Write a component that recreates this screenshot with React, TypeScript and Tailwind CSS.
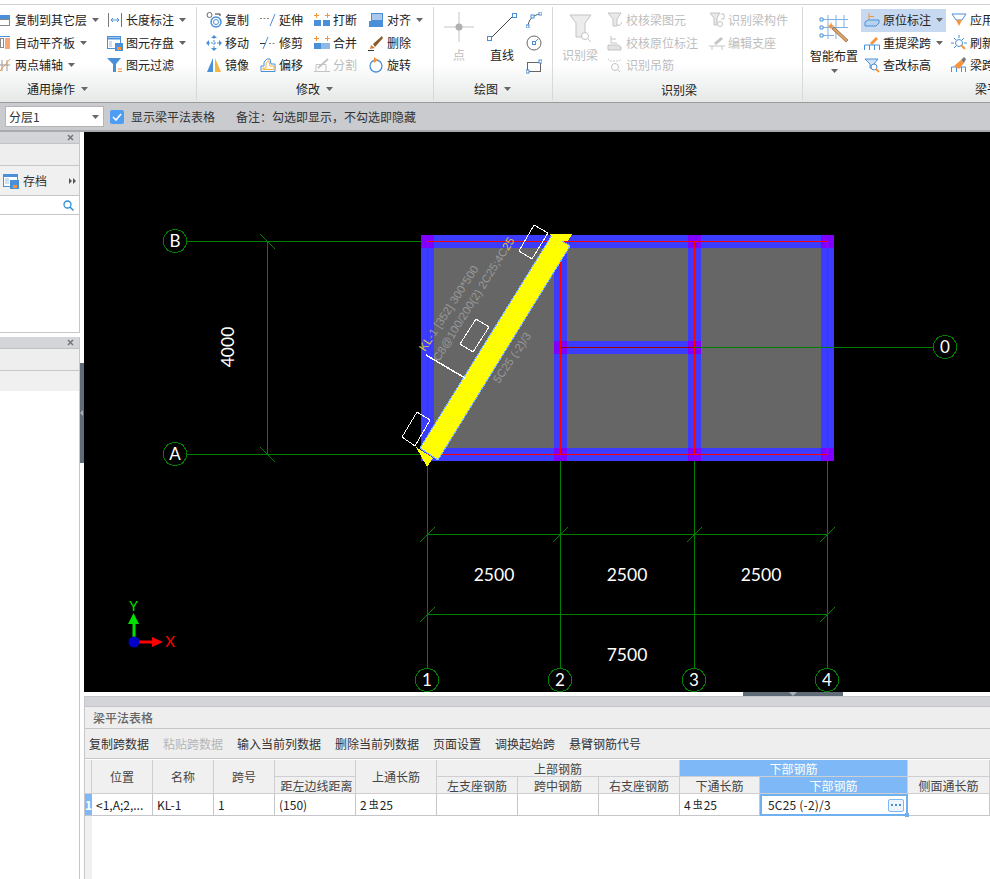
import type { ReactNode } from 'react'

const BLUE = '#4a90d9'
const ORANGE = '#f5943c'
const GRAY = '#c4c4c4'
const GREEN = '#008000'

function Ico({ children, size = 16 }: { children: ReactNode; size?: number }) {
  return (
    <svg width={size} height={size} viewBox="0 0 16 16" fill="none" className="shrink-0">
      {children}
    </svg>
  )
}

function Caret({ className = '' }: { className?: string }) {
  return (
    <svg width="7" height="4" viewBox="0 0 7 4" className={`shrink-0 ${className}`}>
      <path d="M0 0h7L3.5 4z" fill="#666" />
    </svg>
  )
}

function Item({
  icon,
  label,
  caret,
  disabled,
  active,
}: {
  icon: ReactNode
  label: string
  caret?: boolean
  disabled?: boolean
  active?: boolean
}) {
  return (
    <div
      className={`flex items-center gap-[3px] h-[22.5px] whitespace-nowrap ${
        disabled ? 'text-[#bdbdbd]' : 'text-[#222]'
      } ${active ? 'bg-[#c7d9f1] -ml-[3px] pl-[3px]' : ''}`}
    >
      {icon}
      <span>{label}</span>
      {caret && <Caret className="ml-[2px]" />}
    </div>
  )
}

function Group({
  width,
  label,
  labelClass,
  caret,
  children,
}: {
  width: string
  label: string
  labelClass: string
  caret?: boolean
  children: ReactNode
}) {
  return (
    <div className={`${width} shrink-0 flex flex-col border-r border-[#d6d8da] my-[2px]`}>
      <div className="flex h-[71px] pt-[2px]">{children}</div>
      <div className={`flex items-center h-[22px] gap-[6px] ${labelClass}`}>
        <span>{label}</span>
        {caret && <Caret />}
      </div>
    </div>
  )
}

function Ribbon() {
  return (
    <div className="h-[98px] flex bg-gradient-to-b from-white from-60% to-[#e6e8e8] border-b border-[#9a9c9e] text-xs text-[#222]">
      <Group width="w-[197px]" label="通用操作" labelClass="pl-[27px]" caret>
        <div className="w-[111px] shrink-0 -ml-[4px]">
          <Item
            caret
            label="复制到其它层"
            icon={
              <Ico>
                <rect x="0" y="3" width="14" height="4" fill={BLUE} />
                <rect x="0.500" y="7.500" width="13" height="6" stroke="#888" />
              </Ico>
            }
          />
          <Item
            caret
            label="自动平齐板"
            icon={
              <Ico>
                <path d="M0 1.500h14" stroke={BLUE} />
                <rect x="4.500" y="3.500" width="3" height="9" stroke="#888" />
                <rect x="9" y="3" width="5" height="11" fill="#f5a77a" />
              </Ico>
            }
          />
          <Item
            caret
            label="两点辅轴"
            icon={
              <Ico>
                <path d="M6 3v11M11 3v11M3 8h11" stroke="#999" />
                <path d="M4 14L14 2" stroke={ORANGE} />
              </Ico>
            }
          />
        </div>
        <div>
          <Item
            caret
            label="长度标注"
            icon={
              <Ico>
                <path d="M1.500 1v14M14.500 1v14" stroke="#777" />
                <path d="M4 8h8M6 6L4 8l2 2M10 6l2 2-2 2" stroke={BLUE} />
              </Ico>
            }
          />
          <Item
            caret
            label="图元存盘"
            icon={
              <Ico>
                <rect x="0.500" y="1.500" width="13" height="12" stroke={BLUE} fill="#fff" />
                <path d="M0 3.500h14" stroke={BLUE} strokeWidth="2" />
                <path d="M2 7h3M2 9h3M2 11h3" stroke="#9bbfe6" />
                <rect x="8" y="8" width="8" height="8" fill={BLUE} />
                <rect x="10" y="12" width="4" height="3" fill={ORANGE} />
              </Ico>
            }
          />
          <Item
            label="图元过滤"
            icon={
              <Ico>
                <path d="M0 1h14L9 7v8H6V7z" fill={BLUE} />
                <path d="M11 12h4M11 14.500h4" stroke={ORANGE} />
              </Ico>
            }
          />
        </div>
      </Group>

      <Group width="w-[237px]" label="修改" labelClass="pl-[99px]" caret>
        <div className="w-[54px] shrink-0 ml-[9px]">
          <Item
            label="复制"
            icon={
              <Ico>
                <circle cx="3.500" cy="3" r="2.500" stroke="#666" />
                <circle cx="10" cy="10" r="5" stroke={BLUE} strokeWidth="1.500" />
                <circle cx="10" cy="10" r="2.500" stroke={BLUE} />
                <path d="M9 2h5v2" stroke="#333" />
              </Ico>
            }
          />
          <Item
            label="移动"
            icon={
              <Ico>
                <path d="M8 2v12M2 8h12" stroke={BLUE} strokeDasharray="2 1" />
                <path d="M8 0l3 3H5zM8 16l3-3H5zM0 8l3-3v6zM16 8l-3-3v6z" fill={BLUE} />
              </Ico>
            }
          />
          <Item
            label="镜像"
            icon={
              <Ico>
                <path d="M7 1v14H1z" fill={BLUE} />
                <path d="M9 1v14h6z" fill="#f5b53c" />
              </Ico>
            }
          />
        </div>
        <div className="w-[54px] shrink-0">
          <Item
            label="延伸"
            icon={
              <Ico>
                <path d="M0 6.500h9" stroke="#888" strokeDasharray="2 1.500" />
                <path d="M10 14l5-12" stroke={BLUE} />
              </Ico>
            }
          />
          <Item
            label="修剪"
            icon={
              <Ico>
                <path d="M0 8.500h6" stroke="#333" />
                <path d="M9 8.500h7" stroke="#888" strokeDasharray="2 1.500" />
                <path d="M3 14L8 2" stroke={BLUE} />
              </Ico>
            }
          />
          <Item
            label="偏移"
            icon={
              <Ico>
                <path d="M1 14.500V9h3V5l3-3h3l1 5h4v7.500z" stroke={BLUE} />
                <path d="M3 12.500V11h3V6l2-2h1l1 5h4v3.500z" stroke="#f5b53c" />
              </Ico>
            }
          />
        </div>
        <div className="w-[54px] shrink-0">
          <Item
            label="打断"
            icon={
              <Ico>
                <path d="M0 3.500h5M2.500 1v5M11 3.500h5M13.500 1v5" stroke={ORANGE} />
                <rect x="0" y="8" width="7" height="6" fill={BLUE} />
                <rect x="9" y="8" width="7" height="6" fill={BLUE} />
              </Ico>
            }
          />
          <Item
            label="合并"
            icon={
              <Ico>
                <path d="M0 3.500h5M2.500 1v5M11 3.500h5M13.500 1v5" stroke={ORANGE} />
                <rect x="0" y="8" width="7" height="6" fill={BLUE} />
                <rect x="7" y="8" width="9" height="6" fill="#8db8e8" />
              </Ico>
            }
          />
          <Item
            disabled
            label="分割"
            icon={
              <Ico>
                <path d="M0 14.500h16M2 14V7.500h10V14" stroke={GRAY} />
                <path d="M4 11l10-9" stroke={GRAY} strokeWidth="2" />
              </Ico>
            }
          />
        </div>
        <div className="shrink-0">
          <Item
            caret
            label="对齐"
            icon={
              <Ico>
                <rect x="3.500" y="1.500" width="11" height="7" fill="#a9c8ec" stroke={BLUE} />
                <rect x="1" y="9" width="14" height="6" fill={BLUE} />
              </Ico>
            }
          />
          <Item
            label="删除"
            icon={
              <Ico>
                <path d="M5 9l9-8 1 2-8 9z" fill="#8a5a2c" />
                <path d="M3 10l4 3-5 1z" fill="#d97a30" />
                <path d="M0 15.500h6" stroke="#333" />
              </Ico>
            }
          />
          <Item
            label="旋转"
            icon={
              <Ico>
                <circle cx="8" cy="9" r="6" stroke={BLUE} strokeWidth="1.300" />
                <path d="M6 0l4 3-4 3z" fill={ORANGE} />
              </Ico>
            }
          />
        </div>
      </Group>

      <Group width="w-[119px]" label="绘图" labelClass="pl-[40px]" caret>
        <div className="w-[30px] ml-[10px] shrink-0 flex flex-col items-center">
          <svg width="30" height="30" viewBox="0 0 30 30" className="mt-[3px]">
            <path d="M15 0v30M0 15h30" stroke="#c4c4c4" />
            <circle cx="15" cy="15" r="3.500" fill="#b0b0b0" />
          </svg>
          <span className="mt-[5px] text-[#bdbdbd]">点</span>
        </div>
        <div className="w-[40px] ml-[8px] shrink-0 flex flex-col items-center">
          <svg width="30" height="30" viewBox="0 0 30 30" className="mt-[3px]">
            <path d="M3 27L27 3" stroke="#444" />
            <rect x="0.500" y="24.500" width="4" height="4" fill="#fff" stroke={BLUE} />
            <rect x="25.500" y="1.500" width="4" height="4" fill="#fff" stroke={BLUE} />
          </svg>
          <span className="mt-[5px]">直线</span>
        </div>
        <div className="ml-[4px] shrink-0 flex flex-col gap-[7px] mt-[3px]">
          <Ico>
            <path d="M2 15C2 8 7 3 14 2" stroke="#555" />
            <rect x="0" y="13" width="3" height="3" fill="#fff" stroke={BLUE} />
            <rect x="5" y="3" width="3" height="3" fill="#fff" stroke={BLUE} />
            <rect x="13" y="0" width="3" height="3" fill="#fff" stroke={BLUE} />
          </Ico>
          <Ico>
            <circle cx="8" cy="8" r="7" stroke="#666" />
            <path d="M8 8l4-4" stroke={BLUE} />
            <rect x="6.500" y="6.500" width="3" height="3" fill="#fff" stroke={BLUE} />
          </Ico>
          <Ico>
            <rect x="1.500" y="4.500" width="13" height="9" stroke="#666" />
            <rect x="0" y="12" width="3" height="3" fill="#fff" stroke={BLUE} />
            <rect x="13" y="2" width="3" height="3" fill="#fff" stroke={BLUE} />
          </Ico>
        </div>
      </Group>

      <Group width="w-[250px]" label="识别梁" labelClass="pl-[108px] pt-[2px]">
        <div className="w-[44px] ml-[5px] shrink-0 flex flex-col items-center text-[#bdbdbd]">
          <svg width="23" height="28" viewBox="0 0 23 28" className="mt-[5px]">
            <path d="M1 1h21l-6 8v14H7V9z" fill="#ececec" stroke="#c4c4c4" />
            <circle cx="16" cy="22" r="3.500" fill="#fff" stroke="#c4c4c4" />
            <path d="M19 25l3 3" stroke="#c4c4c4" />
          </svg>
          <span className="mt-[5px]">识别梁</span>
        </div>
        <div className="w-[102px] ml-[5px] shrink-0">
          <Item
            disabled
            label="校核梁图元"
            icon={
              <Ico>
                <path d="M1 1h13l-4 6v7H6V7z" fill="#e8e8e8" stroke={GRAY} />
                <path d="M10 12l2 2 3-4" stroke={GRAY} />
              </Ico>
            }
          />
          <Item
            disabled
            label="校核原位标注"
            icon={
              <Ico>
                <path d="M4 1v7h6M4 4h5" stroke={GRAY} />
                <path d="M1 10h10l3 2v3H1z" fill="#e2e2e2" stroke={GRAY} />
              </Ico>
            }
          />
          <Item
            disabled
            label="识别吊筋"
            icon={
              <Ico>
                <path d="M1 2l2 2h9l2-2" stroke={GRAY} strokeDasharray="2 1" />
                <circle cx="8" cy="10" r="3.500" stroke={GRAY} />
                <path d="M11 13l2 2" stroke={GRAY} />
              </Ico>
            }
          />
        </div>
        <div className="shrink-0">
          <Item
            disabled
            label="识别梁构件"
            icon={
              <Ico>
                <path d="M1 1h10l-3 5v7H5V6z" fill="#e8e8e8" stroke={GRAY} />
                <path d="M12 2h3v5h-3" stroke={GRAY} />
                <circle cx="11" cy="12" r="2.500" stroke={GRAY} />
              </Ico>
            }
          />
          <Item
            disabled
            label="编辑支座"
            icon={
              <Ico>
                <path d="M5 8l7-6 2 2-7 6z" fill={GRAY} />
                <path d="M0 11h16M3 11v4M13 11v4" stroke={GRAY} />
              </Ico>
            }
          />
        </div>
      </Group>

      <div className="flex-1 flex flex-col my-[2px]">
        <div className="flex h-[71px] pt-[2px]">
          <div className="w-[52px] ml-[5px] shrink-0 flex flex-col items-center">
            <svg width="30" height="29" viewBox="0 0 30 29" className="mt-[5px]">
              <path d="M9 1v24M17 1v24M25 1v12M3 5.500h26M3 13.500h26M3 21.500h12" stroke="#7fb0e6" />
              <path d="M1 4h3v3H1zM1 12h3v3H1zM1 20h3v3H1z" fill="#fff" stroke={BLUE} />
              <path d="M15 13l14 13-2 2-14-13z" fill="#d9a36b" stroke="#8a5a2c" strokeWidth="0.700" />
              <path d="M12 8l1 3 3 1-3 1-1 3-1-3-3-1 3-1z" fill={ORANGE} />
            </svg>
            <span className="mt-[5px]">智能布置</span>
            <Caret className="mt-[5px]" />
          </div>
          <div className="w-[85px] ml-[1px] pl-[3px] shrink-0">
            <Item
              active
              caret
              label="原位标注"
              icon={
                <Ico>
                  <path d="M5 1v7.500h6M5 4.500h5" stroke={ORANGE} />
                  <path d="M1 10l3-2h11v3l-3 3H1z" fill="#b6d2f0" stroke={BLUE} />
                </Ico>
              }
            />
            <Item
              caret
              label="重提梁跨"
              icon={
                <Ico>
                  <path d="M6 8l6-6 2 2-6 6z" fill={ORANGE} />
                  <path d="M0.500 15v-5h15v5M5.500 10v5M10.500 10v5" stroke={BLUE} />
                </Ico>
              }
            />
            <Item
              label="查改标高"
              icon={
                <Ico>
                  <path d="M1 2h13l-4 5v4H6V7z" fill="#cfe2f6" stroke={BLUE} />
                  <circle cx="10" cy="10" r="3" fill="#fff" stroke={BLUE} />
                  <path d="M12 12l3 3" stroke={ORANGE} strokeWidth="2" />
                </Ico>
              }
            />
          </div>
          <div className="ml-[5px] shrink-0">
            <Item
              label="应用同名梁"
              icon={
                <Ico>
                  <path d="M1 2h14l-4 6H5z" stroke={BLUE} />
                  <path d="M5 8h6l-3 6z" fill={ORANGE} />
                </Ico>
              }
            />
            <Item
              label="刷新支座尺寸"
              icon={
                <Ico>
                  <circle cx="8" cy="8" r="3.500" stroke={BLUE} />
                  <path d="M8 0v3M3 8H0M16 8h-3M3 3l2 2M13 3l-2 2M3 13l2-2" stroke={BLUE} />
                  <path d="M10 10l4 4" stroke={ORANGE} strokeWidth="2" />
                </Ico>
              }
            />
            <Item
              label="梁跨数据复制"
              icon={
                <Ico>
                  <path d="M0.500 15v-5h14v5M5.500 10v5M10.500 10v5" stroke={BLUE} />
                  <path d="M3 9l7-6 3 3-5 6z" fill={ORANGE} />
                  <path d="M10 3l3-3 2 2-2 4z" fill="#777" />
                </Ico>
              }
            />
          </div>
        </div>
        <div className="h-[22px] pl-[172px] flex items-center">梁平法表格</div>
      </div>
    </div>
  )
}

function OptionBar() {
  return (
    <div className="h-[29px] flex items-center bg-[#c9cbcf] text-xs text-[#333] border-b-2 border-[#a8aaae] pl-[5px]">
      <div className="w-[99px] h-[21px] flex items-center justify-between bg-white border border-[#b5b5b5] pl-[3px] pr-[4px]">
        <span>分层1</span>
        <Caret />
      </div>
      <div className="ml-[6px] w-[14px] h-[14px] rounded-[2px] bg-[#4d9df5] flex items-center justify-center">
        <svg width="10" height="8" viewBox="0 0 10 8">
          <path d="M1 4l3 3 5-6" stroke="#fff" strokeWidth="1.600" fill="none" />
        </svg>
      </div>
      <span className="ml-[7px]">显示梁平法表格</span>
      <span className="ml-[21px]">备注：勾选即显示，不勾选即隐藏</span>
    </div>
  )
}

function TitleBar() {
  return (
    <div className="h-[12px] bg-[#d3d5d9] flex items-center justify-end pr-[5px] border-b border-[#c0c2c6]">
      <svg width="7" height="7" viewBox="0 0 7 7">
        <path d="M1 1l5 5M6 1L1 6" stroke="#777" strokeWidth="1.600" />
      </svg>
    </div>
  )
}

function SidePanel() {
  return (
    <div className="w-[84px] shrink-0 flex flex-col bg-white">
      <div className="w-[80px] h-[201px] flex flex-col border-r border-b border-[#c4c6ca] text-xs">
        <TitleBar />
        <div className="h-[22px] bg-[#eeeeee] border-b border-[#c4c6ca]" />
        <div className="h-[30px] bg-[#f0f0f0] border-b border-[#c4c6ca] flex items-center pl-[3px] pr-[3px]">
          <Ico>
            <rect x="0.500" y="1.500" width="14" height="12" fill="#fff" stroke={BLUE} />
            <path d="M0 3h15" stroke={BLUE} strokeWidth="2" />
            <path d="M2 6h4M2 8h4M2 10h4" stroke="#9bbfe6" />
            <rect x="7" y="7" width="9" height="9" fill={BLUE} />
            <rect x="10" y="12" width="4" height="3" fill={ORANGE} />
          </Ico>
          <span className="ml-[4px] text-[#333]">存档</span>
          <svg width="7" height="6" viewBox="0 0 7 6" className="ml-auto">
            <path d="M0 0l3 3-3 3zM4 0l3 3-3 3z" fill="#555" />
          </svg>
        </div>
        <div className="h-[19px] border-b border-[#c4c6ca] flex items-center justify-end pr-[5px]">
          <svg width="11" height="11" viewBox="0 0 11 11" fill="none">
            <circle cx="4.500" cy="4.500" r="3.500" stroke="#2f8fd0" strokeWidth="1.300" />
            <path d="M7 7l3.500 3.500" stroke="#2f8fd0" strokeWidth="1.500" />
          </svg>
        </div>
      </div>
      <div className="h-[4px]" />
      <div className="relative flex-1 w-[80px] flex flex-col border-r border-[#c4c6ca]">
        <TitleBar />
        <div className="h-[22px] bg-[#eeeeee] border-b border-[#c4c6ca]" />
        <div className="h-[20px] bg-[#f0f0f0]" />
        <div className="absolute left-[80px] top-[26px] w-[4px] h-[100px] bg-[#5f6b76] flex items-center">
          <svg width="3" height="6" viewBox="0 0 3 6">
            <path d="M3 0v6L0 3z" fill="#a9b0b6" />
          </svg>
        </div>
      </div>
    </div>
  )
}

// axis bubbles are faceted in the CAD view, not true circles
function Bubble({ x, y, label }: { x: number; y: number; label: string }) {
  const points = Array.from({ length: 10 }, (_, i) => {
    const a = (Math.PI / 5) * i + Math.PI / 2
    return `${(x + 12 * Math.cos(a)).toFixed(1)},${(y + 12 * Math.sin(a)).toFixed(1)}`
  }).join(' ')
  return (
    <g>
      <polygon points={points} fill="#000" stroke={GREEN} shapeRendering="crispEdges" />
      <text x={x} y={y + 6} textAnchor="middle" fontSize="17" fill="#fff">
        {label}
      </text>
    </g>
  )
}

function Canvas() {
  const purple = [
    [421, 235],
    [688, 235],
    [821, 235],
    [554, 341],
    [688, 341],
    [554, 448],
    [688, 448],
    [821, 448],
  ]
  return (
    <svg
      viewBox="84 132 906 560"
      className="block w-[906px] h-[560px] bg-black"
      style={{ fontFamily: 'Lato, "Liberation Sans", sans-serif' }}
    >
      <g shapeRendering="crispEdges">
        <path
          d="M187 241.5H427M187 454.5H427M427.5 461V668M560.5 461V668M694.5 461V668M827.5 461V668M267.5 241V454M427 534.5H828M427 614.5H828"
          stroke={GREEN}
        />
        <path
          d="M260 234L275 249M260 447L275 462M420 542L435 527M553 542L568 527M687 542L702 527M820 542L835 527M420 622L435 607M820 622L835 607"
          stroke={GREEN}
        />

        <rect x="421" y="235" width="413" height="226" fill="#3c3cff" />
        <rect x="434" y="248" width="120" height="200" fill="#666" />
        <rect x="567" y="248" width="121" height="93" fill="#666" />
        <rect x="567" y="354" width="121" height="94" fill="#666" />
        <rect x="701" y="248" width="120" height="200" fill="#666" />
        {purple.map(([x, y]) => (
          <rect key={`${x}-${y}`} x={x} y={y} width="13" height="13" fill="#8000ff" />
        ))}
        <path d="M427 241.5H828M427 454.5H828M427.5 241V455M560.5 241V455M694.5 241V455M827.5 241V455" stroke="#ff0000" />
        <path d="M560 347.5H694" stroke="#a00000" />
        <path d="M694 347.5H934" stroke={GREEN} />

        <path d="M552 235L570 246L438 460L420 448Z" fill="#ffff00" stroke="#7fb8ff" />
        <path d="M549 234H572L568 241L556 241Z" fill="#ffff00" />
        <path d="M416 447L433 458L427 467Z" fill="#ffff00" />
        <g fill="none" stroke="#fff">
          <path d="M534 225L548 233L532 259L519 251Z" />
          <path d="M476 319L489 327L473 352L460 344Z" />
          <path d="M417 412L430 420L415 446L402 437Z" />
        </g>
        <path d="M426 355L465 378" stroke="#fff" strokeWidth="1.500" />
      </g>

      <g fontSize="11.5" fill="#999" style={{ fontFamily: '"Liberation Sans", sans-serif' }}>
        <text transform="translate(425 352) rotate(-57)">
          <tspan fill="#d8c83a">KL</tspan>-1 [352] 300*500
        </text>
        <text transform="translate(439 362) rotate(-58)">
          C8@100/200(2) 2C25;4C<tspan fill="#d8c83a">25</tspan>
        </text>
        <text transform="translate(499 384) rotate(-56)">5C25 (-2)/3</text>
      </g>

      <g fontSize="17.500" fill="#fff" textAnchor="middle">
        <text x="494" y="581">2500</text>
        <text x="627" y="581">2500</text>
        <text x="761" y="581">2500</text>
        <text x="627" y="661">7500</text>
        <text transform="translate(234 347) rotate(-90)">4000</text>
      </g>

      <Bubble x={175} y={241} label="B" />
      <Bubble x={175} y={454} label="A" />
      <Bubble x={945} y={347} label="0" />
      <Bubble x={427} y={680} label="1" />
      <Bubble x={560} y={680} label="2" />
      <Bubble x={694} y={680} label="3" />
      <Bubble x={827} y={680} label="4" />

      <path d="M134 642V622" stroke="#00e000" strokeWidth="3" />
      <path d="M133.500 613L139 624H128Z" fill="#00e000" />
      <path d="M134 642H153" stroke="#ff0000" strokeWidth="3" />
      <path d="M163 642L152 637V647Z" fill="#ff0000" />
      <circle cx="134" cy="642" r="5.500" fill="#0000c8" />
      <text x="133.500" y="611" fontSize="14" fill="#00e000" textAnchor="middle">Y</text>
      <text x="170" y="647" fontSize="15" fill="#ff0000" textAnchor="middle">X</text>
    </svg>
  )
}

const headCell =
  'flex items-center justify-center pt-[1px] bg-[#f0f0f0] border-r border-b border-[#cfcfd3] text-[#444] whitespace-nowrap overflow-hidden'
const bodyCell = 'flex items-center pl-[4px] pt-[1px] border-r border-b border-[#c4c6ca] text-[#222]'

function Rebar({ n }: { n: string }) {
  return (
    <span>
      {n}
      <span className="text-[10px] relative -top-[2px] ml-[2px] mr-[1px]">虫</span>25
    </span>
  )
}

function BeamTable() {
  return (
    <div className="flex-1 flex flex-col bg-white border-l border-[#c4c6ca] text-xs">
      <div className="h-[11px] bg-[#d3d5d9] border-y border-[#c4c6ca]" />
      <div className="h-[22px] bg-[#eeeeee] border-b border-[#c4c6ca] flex items-center pl-[8px] pt-[1px] text-[#666] font-medium">
        梁平法表格
      </div>
      <div className="h-[30px] bg-[#eeeeee] border-b border-[#c4c6ca] flex items-center gap-[14px] pl-[4px] text-[#333]">
        <span>复制跨数据</span>
        <span className="text-[#b5b5b5]">粘贴跨数据</span>
        <span>输入当前列数据</span>
        <span>删除当前列数据</span>
        <span>页面设置</span>
        <span>调换起始跨</span>
        <span>悬臂钢筋代号</span>
      </div>
      <div className="mt-[1px] grid grid-cols-[7px_61px_61px_61px_81px_81px_81px_81px_81px_80px_148px_82px] grid-rows-[17px_17px_22px]">
        <div className={`${headCell} row-span-2`} />
        <div className={`${headCell} row-span-2`}>位置</div>
        <div className={`${headCell} row-span-2`}>名称</div>
        <div className={`${headCell} row-span-2`}>跨号</div>
        <div className={headCell} />
        <div className={`${headCell} row-span-2`}>上通长筋</div>
        <div className={`${headCell} col-span-3`}>上部钢筋</div>
        <div className={`${headCell} col-span-2 !bg-[#7eb8f7] !text-white`}>下部钢筋</div>
        <div className={headCell} />
        <div className={`${headCell} pl-[3px]`}>距左边线距离</div>
        <div className={headCell}>左支座钢筋</div>
        <div className={headCell}>跨中钢筋</div>
        <div className={headCell}>右支座钢筋</div>
        <div className={headCell}>下通长筋</div>
        <div className={`${headCell} !bg-[#7eb8f7] !text-white`}>下部钢筋</div>
        <div className={headCell}>侧面通长筋</div>

        <div className="flex items-center justify-center bg-[#7eb8f7] text-white font-bold border-b border-[#c4c6ca]">
          1
        </div>
        <div className={bodyCell}>&lt;1,A;2,...</div>
        <div className={bodyCell}>KL-1</div>
        <div className={bodyCell}>1</div>
        <div className={bodyCell}>(150)</div>
        <div className={bodyCell}><Rebar n="2" /></div>
        <div className={bodyCell} />
        <div className={bodyCell} />
        <div className={bodyCell} />
        <div className={bodyCell}><Rebar n="4" /></div>
        <div className="relative flex items-center justify-between border-2 border-[#6fb0f0] pl-[6px] pr-[2px] text-[#222]">
          <span className="tracking-[0.2px]">5C25 (-2)/3</span>
          <div className="w-[16px] h-[13px] rounded-[2px] border border-[#7eb8f7] bg-[#eef5fd] flex items-center justify-center gap-[2px]">
            <span className="w-[2px] h-[2px] bg-[#4a90d9]" />
            <span className="w-[2px] h-[2px] bg-[#4a90d9]" />
            <span className="w-[2px] h-[2px] bg-[#4a90d9]" />
          </div>
          <div className="absolute -right-[3px] -bottom-[3px] w-[4px] h-[4px] bg-[#6fb0f0]" />
        </div>
        <div className={bodyCell} />
      </div>
      <div className="flex-1 flex">
        <div className="w-[7px] bg-[#f0f0f0]" />
      </div>
    </div>
  )
}

export default function App() {
  return (
    <div
      className="w-[990px] h-[879px] overflow-hidden flex flex-col bg-white"
      style={{ fontFamily: '"Noto Sans CJK SC", "Liberation Sans", sans-serif' }}
    >
      <div className="h-[5px] border-b border-[#cfcfcf] bg-white" />
      <Ribbon />
      <OptionBar />
      <div className="flex-1 flex min-h-0">
        <SidePanel />
        <div className="flex-1 flex flex-col min-w-0">
          <Canvas />
          <div className="h-[4px] pl-[659px] bg-white">
            <div className="w-[100px] h-[4px] bg-[#5f6b76] flex justify-center">
              <svg width="8" height="4" viewBox="0 0 8 4">
                <path d="M0 0h8L4 4z" fill="#a9b0b6" />
              </svg>
            </div>
          </div>
          <BeamTable />
        </div>
      </div>
    </div>
  )
}
